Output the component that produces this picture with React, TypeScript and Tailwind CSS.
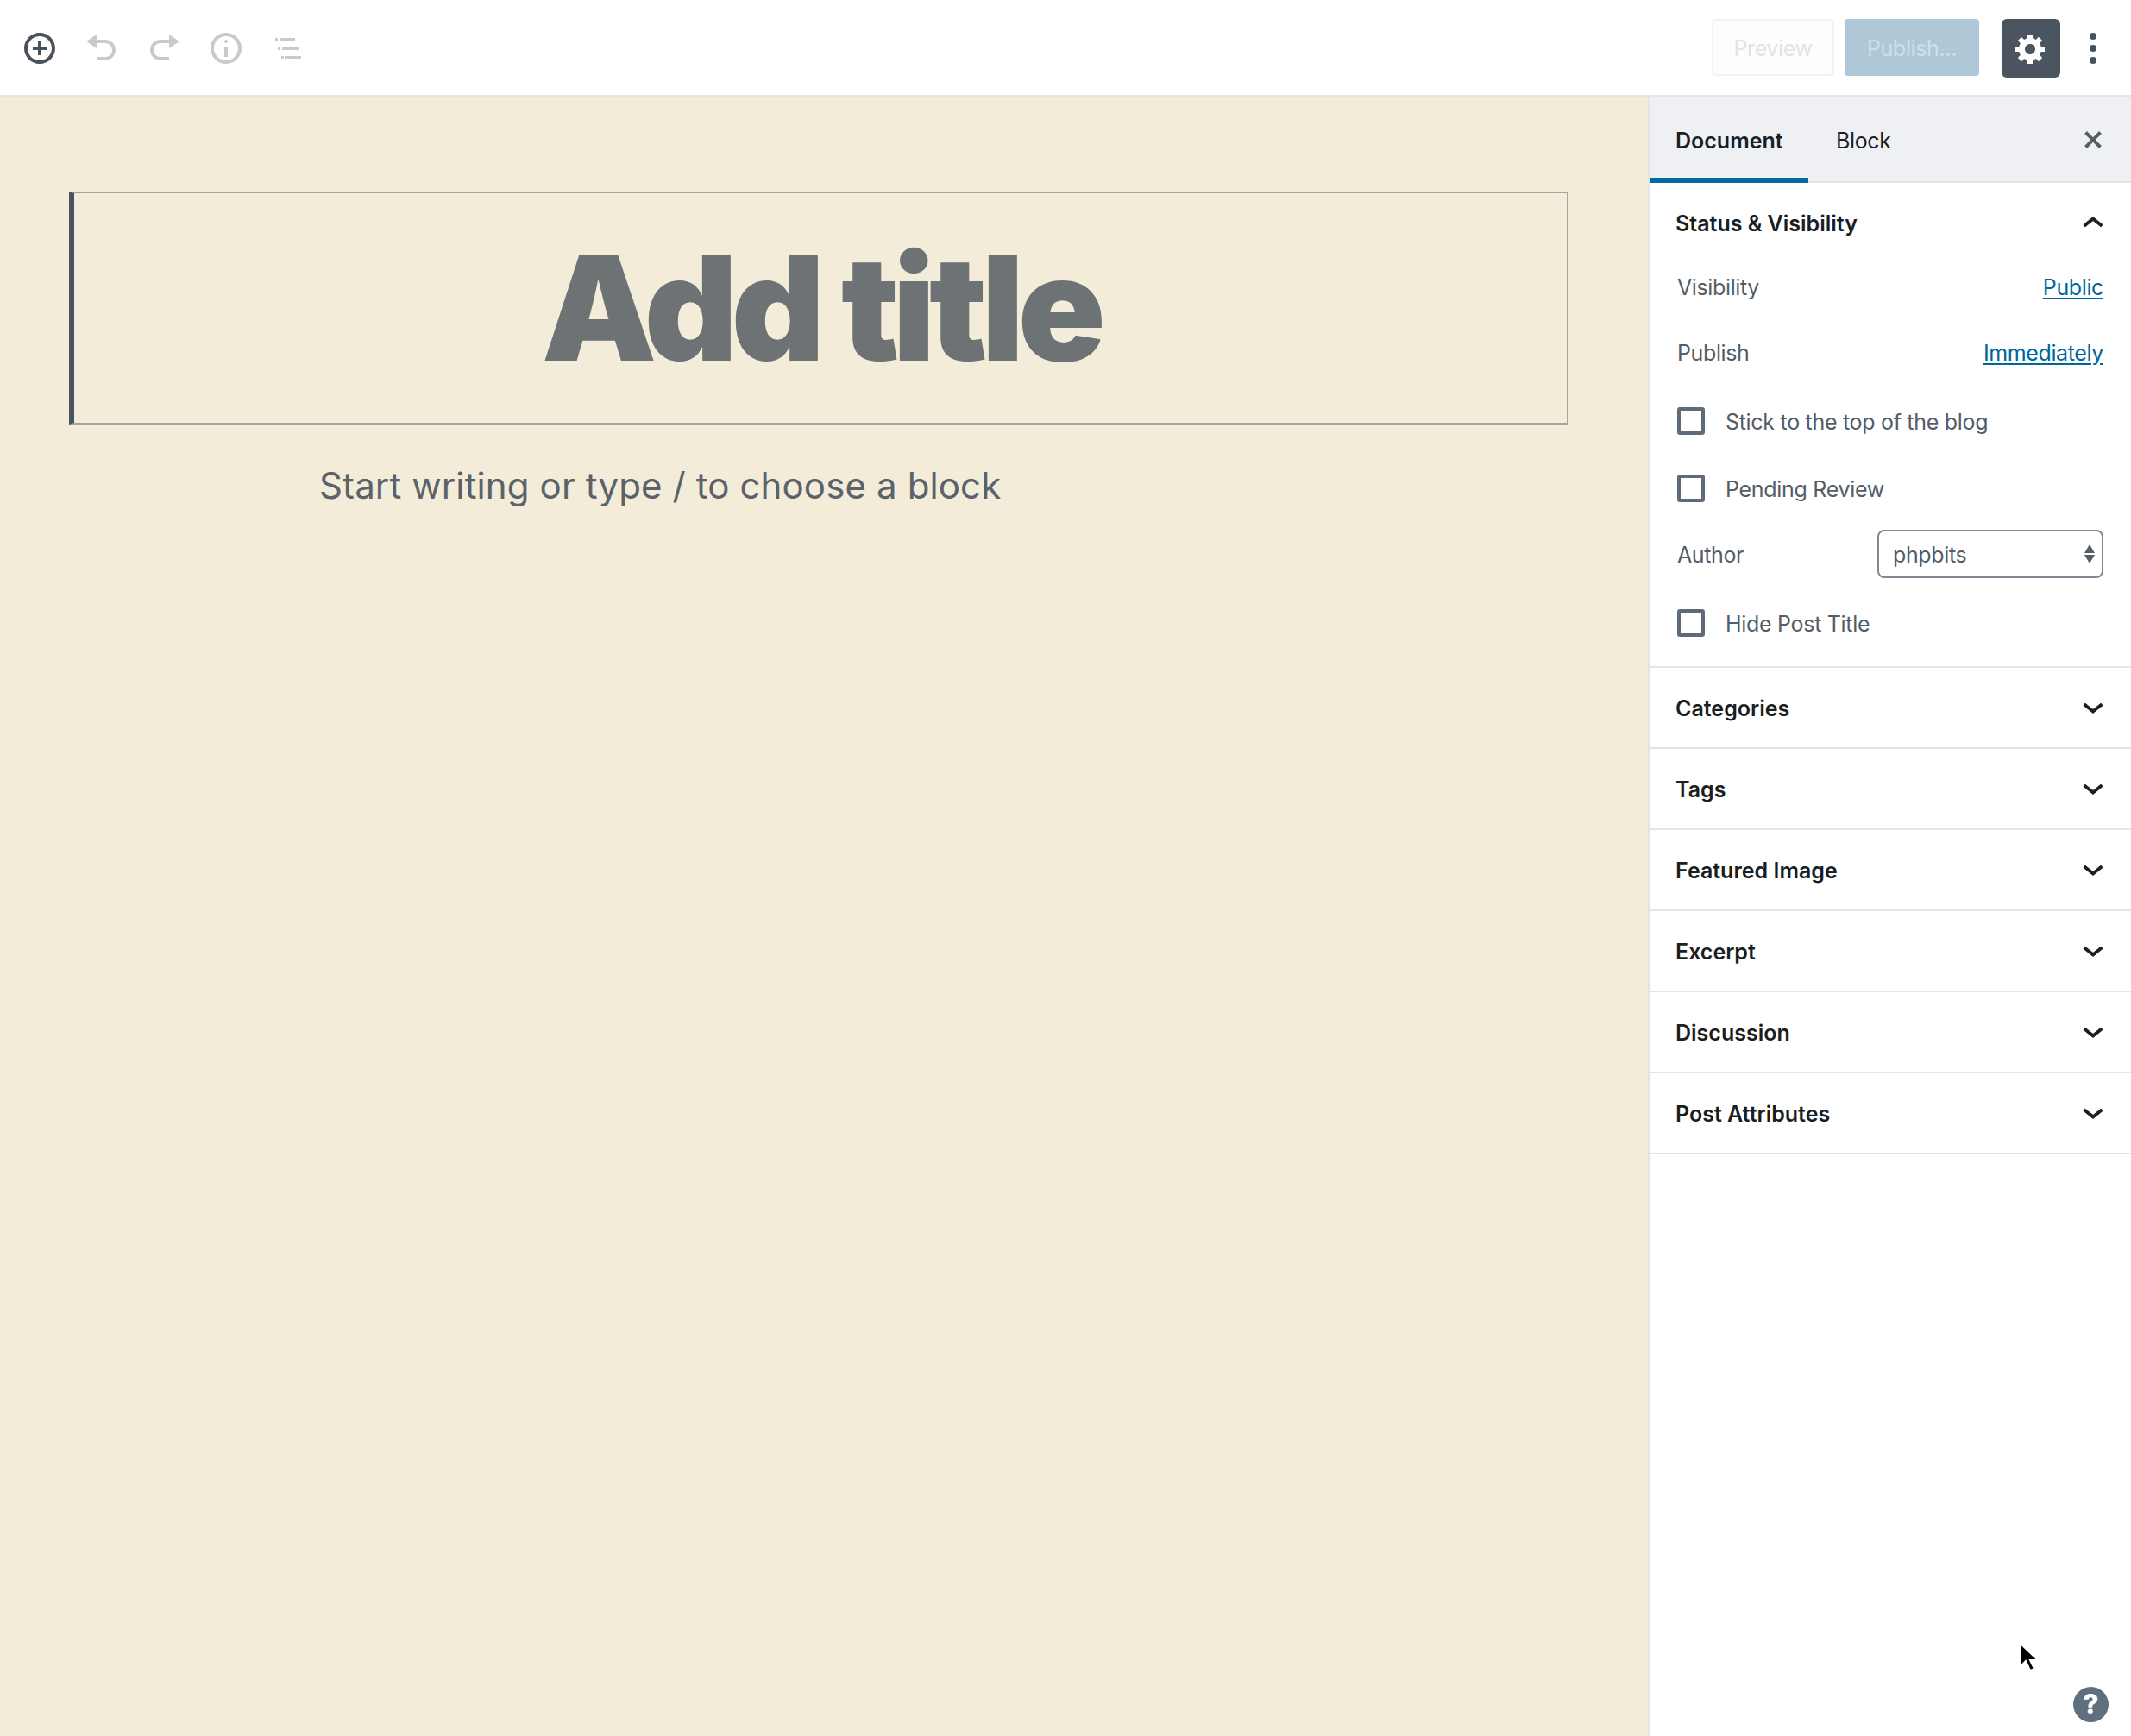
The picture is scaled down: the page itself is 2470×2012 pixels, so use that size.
const sectionTitles = ['Categories', 'Tags', 'Featured Image', 'Excerpt', 'Discussion', 'Post Attributes'];

function Chevron({ up = false }: { up?: boolean }) {
  return (
    <svg width="48" height="48" viewBox="0 0 24 24" className="shrink-0 fill-[#191e23] stroke-[#191e23] stroke-[0.5]">
      <path
        transform={up ? 'translate(0 0.8)' : 'translate(0 -0.8)'}
        d={up ? 'M6.5 12.4L12 8l5.5 4.4-.9 1.2L12 10l-4.6 3.6z' : 'M17.5 11.6L12 16l-5.5-4.4.9-1.2L12 14l4.6-3.6z'}
      />
    </svg>
  );
}

function Icon({ d, color }: { d: string; color: string }) {
  return (
    <svg width="40" height="40" viewBox="0 0 20 20" style={{ fill: color }}>
      <path d={d} />
    </svg>
  );
}

function CheckRow({ label, className }: { label: string; className: string }) {
  return (
    <div className={`flex h-12 items-center ${className}`}>
      <div className="ml-[32px] h-[32px] w-[32px] rounded-[3px] border-[4px] border-[#5f6b78] bg-white" />
      <span className="ml-[24px] pt-[3px] text-[25px] tracking-[-0.012em] text-[#555d66]">{label}</span>
    </div>
  );
}

function InfoRow({ label, value, className }: { label: string; value: string; className: string }) {
  return (
    <div className={`flex h-12 items-center justify-between pl-[32px] pr-[32px] pt-[3px] text-[25px] tracking-[-0.015em] ${className}`}>
      <span className="text-[#555d66]">{label}</span>
      <a className="text-[#00669b] underline underline-offset-[3px]">{value}</a>
    </div>
  );
}

export default function App() {
  return (
    <div className="relative flex h-[2012px] w-[2470px] flex-col overflow-hidden bg-white font-['Inter',sans-serif]">
      {/* Top toolbar */}
      <header className="flex h-[112px] shrink-0 items-start border-b-2 border-[#e2e4e7] bg-white">
        <div className="flex pl-[26px] pt-[36px]">
          <Icon color="#48525c" d="M10 1c-5 0-9 4-9 9s4 9 9 9 9-4 9-9-4-9-9-9zm0 16c-3.9 0-7-3.1-7-7s3.1-7 7-7 7 3.1 7 7-3.1 7-7 7zm1-11H9v3H6v2h3v3h2v-3h3V9h-3V6z" />
          <div className="ml-[32px]">
            <Icon color="#c8cacd" d="M12 5H7V2L1 6l6 4V7h5c2.2 0 4 1.8 4 4s-1.8 4-4 4H7v2h5c3.3 0 6-2.7 6-6s-2.7-6-6-6z" />
          </div>
          <div className="ml-[32px]">
            <Icon color="#c8cacd" d="M8 5h5V2l6 4-6 4V7H8c-2.2 0-4 1.8-4 4s1.8 4 4 4h5v2H8c-3.3 0-6-2.7-6-6s2.7-6 6-6z" />
          </div>
          <div className="ml-[32px]">
            <Icon color="#c8cacd" d="M9 15h2V9H9v6zm1-10c-.5 0-1 .5-1 1s.5 1 1 1 1-.5 1-1-.5-1-1-1zm0-4c-5 0-9 4-9 9s4 9 9 9 9-4 9-9-4-9-9-9zm0 16c-3.9 0-7-3.1-7-7s3.1-7 7-7 7 3.1 7 7-3.1 7-7 7z" />
          </div>
          <svg width="32" height="40" viewBox="0 0 32 40" className="ml-[37px] fill-[#c8cacd]">
            <rect x="0" y="8" width="3" height="3" />
            <rect x="5" y="8" width="18" height="3" />
            <rect x="3" y="19" width="3" height="3" />
            <rect x="8" y="19" width="19" height="3" />
            <rect x="7" y="29" width="3" height="3" />
            <rect x="11" y="29" width="19" height="3" />
          </svg>
        </div>
        <div className="ml-auto flex items-start pt-[22px]">
          <div className="flex h-[66px] w-[142px] items-center justify-center rounded-[4px] border-2 border-[#f3f3f1] bg-[#fdfdfc] pt-[3px] text-[25px] tracking-[-0.015em] text-[#e1e3e5]">
            Preview
          </div>
          <div className="ml-[12px] flex h-[66px] w-[156px] items-center justify-center rounded-[4px] bg-[#afc8d7] pt-[3px] text-[25px] tracking-[-0.015em] text-[#c8e1f0]">
            Publish...
          </div>
          <div className="ml-[26px] flex h-[68px] w-[68px] items-center justify-center rounded-[6px] bg-[#4b5560]">
            <Icon color="#ffffff" d="M18 12h-2.18c-.17.7-.44 1.35-.81 1.93l1.54 1.54-2.1 2.1-1.54-1.54c-.58.36-1.23.63-1.91.79V19H8v-2.18c-.68-.16-1.33-.43-1.91-.79l-1.54 1.54-2.12-2.12 1.54-1.54c-.36-.58-.63-1.23-.79-1.91H1V9.03h2.17c.16-.7.44-1.35.8-1.94L2.43 5.55l2.1-2.1 1.54 1.54c.58-.37 1.24-.64 1.93-.81V2h3v2.18c.68.16 1.33.43 1.91.79l1.54-1.54 2.12 2.12-1.54 1.54c.36.59.64 1.24.8 1.94H18V12zm-8.5 1.5c1.66 0 3-1.34 3-3s-1.34-3-3-3-3 1.34-3 3 1.34 3 3 3z" />
          </div>
          <div className="ml-[34px] mr-[40px] mt-[16px] flex flex-col gap-[6px]">
            <div className="h-2 w-2 rounded-full bg-[#48525c]" />
            <div className="h-2 w-2 rounded-full bg-[#48525c]" />
            <div className="h-2 w-2 rounded-full bg-[#48525c]" />
          </div>
        </div>
      </header>

      <div className="flex min-h-0 flex-1">
        {/* Editor canvas */}
        <main className="min-w-0 flex-1 bg-[#f2ecd9] pl-[80px] pr-[92px] pt-[110px]">
          <div className="flex h-[270px] items-center justify-center border-y-2 border-r-2 border-l-[6px] border-y-[#a0a5a0] border-r-[#a0a5a0] border-l-[#4b5560]">
            <h1 className="text-[168px] font-black leading-none tracking-[-0.044em] text-[#6d7275]">Add title</h1>
          </div>
          <p className="ml-[290px] mt-[42px] text-[42px] leading-[58px] tracking-[0.003em] text-[#5b626a]">
            Start writing or type / to choose a block
          </p>
        </main>

        {/* Settings sidebar */}
        <aside className="w-[560px] shrink-0 border-l-2 border-[#e2e4e7] bg-white">
          <div className="flex h-[100px] items-start border-b-2 border-[#e2e4e7] bg-[#eef0f4]">
            <div className="flex h-[100px] w-[184px] items-center border-b-[6px] border-[#006ba1] pl-[30px] pt-[10px] text-[25px] font-semibold text-[#191e23]">
              Document
            </div>
            <div className="ml-[32px] flex h-[100px] items-center pt-[4px] text-[25px] tracking-[-0.015em] text-[#191e23]">Block</div>
            <div className="ml-auto mr-[24px] mt-[30px]">
              <Icon color="#555d66" d="M14.95 6.46L11.41 10l3.54 3.54-1.41 1.41L10 11.42l-3.53 3.53-1.42-1.42L8.58 10 5.05 6.47l1.42-1.42L10 8.58l3.54-3.53z" />
            </div>
          </div>

          <section className="border-b-2 border-[#e2e4e7] pb-[26px]">
            <div className="flex h-[92px] items-center justify-between pl-[30px] pr-[20px]">
              <span className="pt-[3px] text-[25px] font-semibold text-[#191e23]">Status &amp; Visibility</span>
              <Chevron up />
            </div>
            <InfoRow label="Visibility" value="Public" className="mt-[4px]" />
            <InfoRow label="Publish" value="Immediately" className="mt-[28px]" />
            <CheckRow label="Stick to the top of the blog" className="mt-[32px]" />
            <CheckRow label="Pending Review" className="mt-[30px]" />
            <div className="mt-[28px] flex h-12 items-center justify-between pl-[32px] pr-[32px] text-[25px] tracking-[-0.015em] text-[#555d66]">
              <span className="pt-[3px]">Author</span>
              <div className="flex h-[56px] w-[262px] items-center justify-between rounded-[8px] border-2 border-[#7e8993] pl-[16px] pr-[8px]">
                <span className="pt-[3px]">phpbits</span>
                <svg width="12" height="24" viewBox="0 0 12 24" className="fill-[#555d66]">
                  <path d="M6 1l6 10H0zM6 23l-6-10h12z" />
                </svg>
              </div>
            </div>
            <CheckRow label="Hide Post Title" className="mt-[32px]" />
          </section>

          {sectionTitles.map((title) => (
            <section key={title} className="flex h-[94px] items-center justify-between border-b-2 border-[#e2e4e7] pl-[30px] pr-[20px]">
              <span className="pt-[3px] text-[25px] font-semibold text-[#191e23]">{title}</span>
              <Chevron />
            </section>
          ))}
        </aside>
      </div>

      {/* Mouse pointer */}
      <svg width="24" height="36" viewBox="0 0 24 36" className="absolute left-[2340px] top-[1903px]">
        <path d="M2 2v26l6-6 5 11 5-2-5-10h9z" fill="#000" stroke="#fff" strokeWidth="2" />
      </svg>

      {/* Help button */}
      <div className="absolute left-[2403px] top-[1955px] flex h-[41px] w-[41px] items-center justify-center rounded-full bg-[#5f6f7f] text-[31px] font-extrabold text-white">
        ?
      </div>
    </div>
  );
}
